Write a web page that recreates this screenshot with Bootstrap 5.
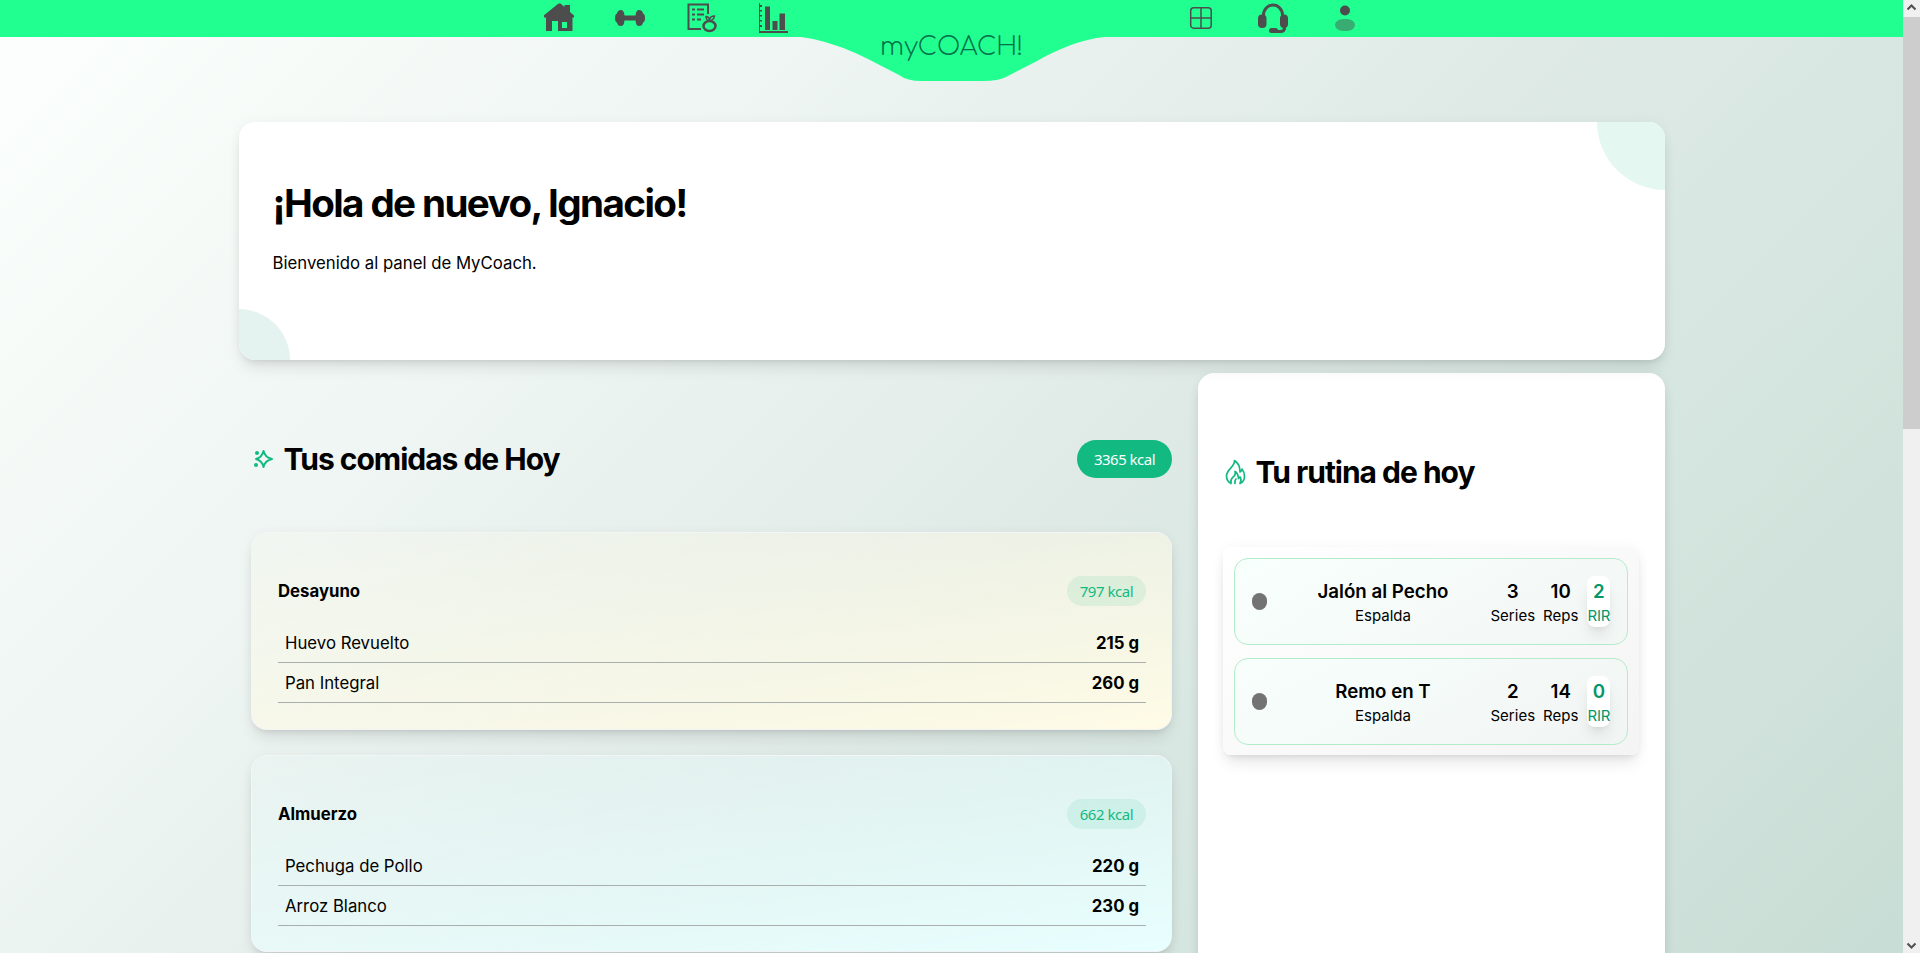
<!DOCTYPE html>
<html lang="es">
<head>
<meta charset="utf-8">
<meta name="viewport" content="width=device-width, initial-scale=1">
<title>MyCoach</title>
<link href="https://cdn.jsdelivr.net/npm/bootstrap@5.3.0/dist/css/bootstrap.min.css" rel="stylesheet">
<style>
html,body{height:100%;overflow:hidden}
body{font-family:Inter,sans-serif;color:#000;font-size:16.75px;line-height:24px;background:#fff}
.page{background:linear-gradient(135deg,#fcfffd 0%,#eef5f2 30%,#dfeae6 55%,#d5e5df 75%,#c8ddd5 100%)}
.top-nav{height:37px;background:#20ff90;z-index:2}
.nav-icons{gap:40px;height:37px}
.nav-icons svg,.bump{display:block}
.ico-left{left:543px;top:0}
.ico-right{left:1186px;top:0}
.bump{left:790px;top:36px}
.brand{left:880px;top:31px;width:142px;font-family:Comfortaa,Lato,sans-serif;font-weight:300;font-size:25.2px;line-height:32px;color:#05704a;white-space:nowrap}
.wrap{width:1426px;margin-left:239px;margin-top:85px}
.soft{box-shadow:0 10px 15px -3px rgba(0,0,0,.1),0 4px 6px -4px rgba(0,0,0,.1),0 0 12px rgba(0,0,0,.04)}
.hero{height:238px;border-radius:16px;padding:57px 33.5px 0}
.hero h1{font-size:38.6px;line-height:48px;font-weight:700;letter-spacing:-1.6px;margin:0 0 24px}
.disc{border-radius:50%}
.disc-a{width:136px;height:136px;right:-68px;top:-68px;background:#e5f7f1}
.disc-b{width:102px;height:102px;left:-51px;bottom:-51px;background:#e4f3f0}
.meals{width:921px;margin-left:12px;padding-top:80px}
.sec-title{font-size:30px;line-height:38px;font-weight:700;letter-spacing:-1.02px;margin:0}
.sec-ico{margin:0 7.500px 0 0}
.total{width:95px;height:38px;background:#12ba82;color:#fff;font:15px/39px "Noto Sans",sans-serif;letter-spacing:-.5px}
.meal{height:198px;border:1px solid rgba(244,243,247,.85);border-radius:16px;padding:43px 25px 0 26px}
.m1{background:linear-gradient(170deg,rgba(255,251,230,.1),#fffbe6);margin-top:54px}
.m2{background:linear-gradient(170deg,rgba(232,255,255,.1),#e8ffff);margin-top:25px;height:197px}
.kc{width:79px;height:30px;background:rgba(18,186,130,.1);color:#12ba82;font:15px/31px "Noto Sans",sans-serif;letter-spacing:-.45px}
.food{height:40px;border-bottom:1px solid #a9afad;padding:8px 7px 0 7px;line-height:24px}
.foods{margin-top:17px}
.routine{width:467px;height:640px;margin-top:13px;margin-left:26px;border-radius:16px 16px 0 0;padding:80px 26px 0 25px}
.exlist{margin-top:56px;border-radius:8px;height:208px;padding:11px 11px 0;background:linear-gradient(150deg,#fff,#f4f4f4)}
.ex{height:87px;border:1px solid #b4ebc9;border-radius:14px;margin-bottom:13px;padding-left:17px;background:linear-gradient(150deg,rgba(245,255,252,.75),rgba(235,244,240,.4))}
.spot{width:15px;height:17px;border-radius:7.5px;background:#737373;margin-top:34px}
.exname{width:215px;margin-left:8.500px}
.big{font-size:18.7px;line-height:28px;font-weight:600}
.sm{font-size:15px;line-height:20px}
.exname,.num{padding-top:19px}
.rir{position:relative;width:23px;height:51px;border-radius:8px;background:#fff;color:#059669;margin:17px 0 0 9px;padding-top:2px;box-shadow:0 10px 15px -3px rgba(0,0,0,.1),0 4px 6px -4px rgba(0,0,0,.1)}
.rir .sm{letter-spacing:-.3px}
.sbar{width:17px;background:#f0f0f0;z-index:3}
.thumb{height:412px;background:#cdcdcd}
</style>
</head>
<body>
<div class="d-flex vh-100 overflow-hidden">
<main class="page flex-grow-1 position-relative overflow-hidden">
<nav class="top-nav position-relative">
<svg class="bump position-absolute" width="330" height="46" viewBox="0 0 330 46"><path d="M0 0V1H11C36 4 65 16 78 23L109 39Q117 45 132 45H193Q208 45 216 41L247 25C268 13 292 3 315 1H330V0Z" fill="#20ff90"/></svg>
<div class="nav-icons ico-left d-flex position-absolute">
<svg width="32" height="37" fill="#4d4d4d"><path fill-rule="evenodd" d="M15.500 3.500h2l4 3.500V5h5.500v7l4 3.500v2H29.500V31H15V21H9V31H3V17.500H1v-2.300zM19 22v6h5v-6z"/></svg>
<svg width="32" height="37" fill="#4d4d4d"><path d="M0 18Q0 14 2 13.500Q2.500 10 6 10Q9 10 9.500 15.500H20.500Q21 10 24 10Q27.500 10 28 13.500Q30 14 30 18T28 22.500Q27.500 26 24 26Q21 26 20.500 20.500H9.500Q9 26 6 26Q2.500 26 2 22.500Q0 22 0 18Z"/></svg>
<svg width="32" height="37" fill="none" stroke="#4d4d4d" stroke-width="2"><path d="M21 14V4.500H1.500V29H14M5 9.500h3m2 0h7M5 14.500h3m2 0h7M5 19.500h3m2 0h4"/><ellipse cx="22.500" cy="26" rx="6" ry="5" stroke-width="2.500"/><path d="M22.500 21Q19 20 19 16.500Q22 16.500 22.500 20Q23 16 27.500 16Q27 20 22.500 21" stroke-width="1.500"/></svg>
<svg width="32" height="37" fill="#4d4d4d"><path d="M-1 3H1V31H29V33H-1zM6 6.500H11V30H6zM13.500 21H18.500V30H13.500zM20.500 13.500H26V30H20.500zM1 5h2v2H1zm0 5h2v1.500H1zm0 5h2v1.500H1zm0 5h2v1.500H1zm0 5h2v2H1z"/></svg>
</div>
<div class="brand position-absolute text-center">myCOACH!</div>
<div class="nav-icons ico-right d-flex position-absolute">
<svg width="32" height="37" fill="none" stroke="#4d4d4d" stroke-width="1.500"><rect x="4.700" y="7.700" width="20.500" height="20.500" rx="3"/><path d="M15 8V28M5 18H25"/></svg>
<svg width="32" height="37" fill="#4d4d4d"><path d="M5.500 16V15a9.500 10 0 0 1 19 0v1M26.500 25v3q0 3.500-4 3.500H15" fill="none" stroke="#4d4d4d" stroke-width="3"/><rect y="14.500" width="8.500" height="13.500" rx="4"/><rect x="22" y="14.500" width="8" height="13.500" rx="4"/><rect x="11" y="28" width="9" height="5" rx="2.500"/></svg>
<svg width="32" height="37" fill="#4d4d4d"><circle cx="15" cy="10.500" r="5"/><rect x="5" y="19" width="20" height="12" rx="8" ry="6" fill="#38ad71"/></svg>
</div>
</nav>
<div class="wrap">
<section class="hero soft bg-white position-relative overflow-hidden">
<span class="disc disc-a position-absolute"></span><span class="disc disc-b position-absolute"></span>
<h1>¡Hola de nuevo, Ignacio!</h1>
<p class="m-0">Bienvenido al panel de MyCoach.</p>
</section>
<div class="d-flex">
<section class="meals">
<div class="d-flex align-items-center justify-content-between">
<div class="d-flex align-items-center"><svg class="sec-ico" width="25" height="24" viewBox="0 0 25 24"><path d="M12.500 4Q14 10.500 21 12Q14 13.500 12.500 20Q11 13.500 5 12Q11 10.500 12.500 4Z" fill="none" stroke="#12ba82" stroke-width="2" stroke-linejoin="round"/><circle cx="6" cy="6" r="2" fill="#12ba82"/><circle cx="5" cy="18" r="2" fill="#12ba82"/></svg><h2 class="sec-title">Tus comidas de Hoy</h2></div>
<span class="total rounded-pill text-center">3365 kcal</span>
</div>
<article class="meal m1 soft">
<div class="d-flex align-items-center justify-content-between"><strong>Desayuno</strong><span class="kc rounded-pill text-center">797 kcal</span></div>
<div class="foods"><div class="food d-flex justify-content-between"><span>Huevo Revuelto</span><strong>215 g</strong></div><div class="food d-flex justify-content-between"><span>Pan Integral</span><strong>260 g</strong></div></div>
</article>
<article class="meal m2 soft">
<div class="d-flex align-items-center justify-content-between"><strong>Almuerzo</strong><span class="kc rounded-pill text-center">662 kcal</span></div>
<div class="foods"><div class="food d-flex justify-content-between"><span>Pechuga de Pollo</span><strong>220 g</strong></div><div class="food d-flex justify-content-between"><span>Arroz Blanco</span><strong>230 g</strong></div></div>
</article>
</section>
<aside class="routine soft bg-white">
<div class="d-flex align-items-center"><svg class="sec-ico" width="25" height="26" viewBox="0 0 25 26" fill="none" stroke="#12ba82" stroke-width="1.700" stroke-linejoin="round" stroke-linecap="round"><path d="M8 24.500Q3.500 22 3.500 17C3.500 10 12 8 11.500 1.500Q17 5 17 13Q19 12 19 10Q21.500 13 21.500 17.500Q21.500 22.500 17 24.500Q19 21 17 18L15.500 19.500Q15 14 12 12.500Q13 16 10 18Q7 21 8 24.500M12 24.500Q11.500 21.500 13 20"/></svg><h2 class="sec-title">Tu rutina de hoy</h2></div>
<div class="exlist soft">
<div class="ex d-flex text-center"><span class="spot"></span><div class="exname"><div class="big">Jalón al Pecho</div><div class="sm">Espalda</div></div><div class="num"><div class="big">3</div><div class="sm">Series</div></div><div class="num ms-2"><div class="big">10</div><div class="sm">Reps</div></div><div class="rir"><div class="big">2</div><div class="sm">RIR</div></div></div>
<div class="ex d-flex text-center"><span class="spot"></span><div class="exname"><div class="big">Remo en T</div><div class="sm">Espalda</div></div><div class="num"><div class="big">2</div><div class="sm">Series</div></div><div class="num ms-2"><div class="big">14</div><div class="sm">Reps</div></div><div class="rir"><div class="big">0</div><div class="sm">RIR</div></div></div>
</div>
</aside>
</div>
</div>
</main>
<div class="sbar d-flex flex-column flex-shrink-0">
<svg width="17" height="17"><path d="M4.500 9.500l4-4 4 4" fill="none" stroke="#505050" stroke-width="2"/></svg>
<div class="thumb"></div>
<svg class="mt-auto" width="17" height="17"><path d="M4.500 7.500l4 4 4-4" fill="none" stroke="#505050" stroke-width="2"/></svg>
</div>
</div>
<script src="https://cdn.jsdelivr.net/npm/bootstrap@5.3.0/dist/js/bootstrap.bundle.min.js"></script>
</body>
</html>
